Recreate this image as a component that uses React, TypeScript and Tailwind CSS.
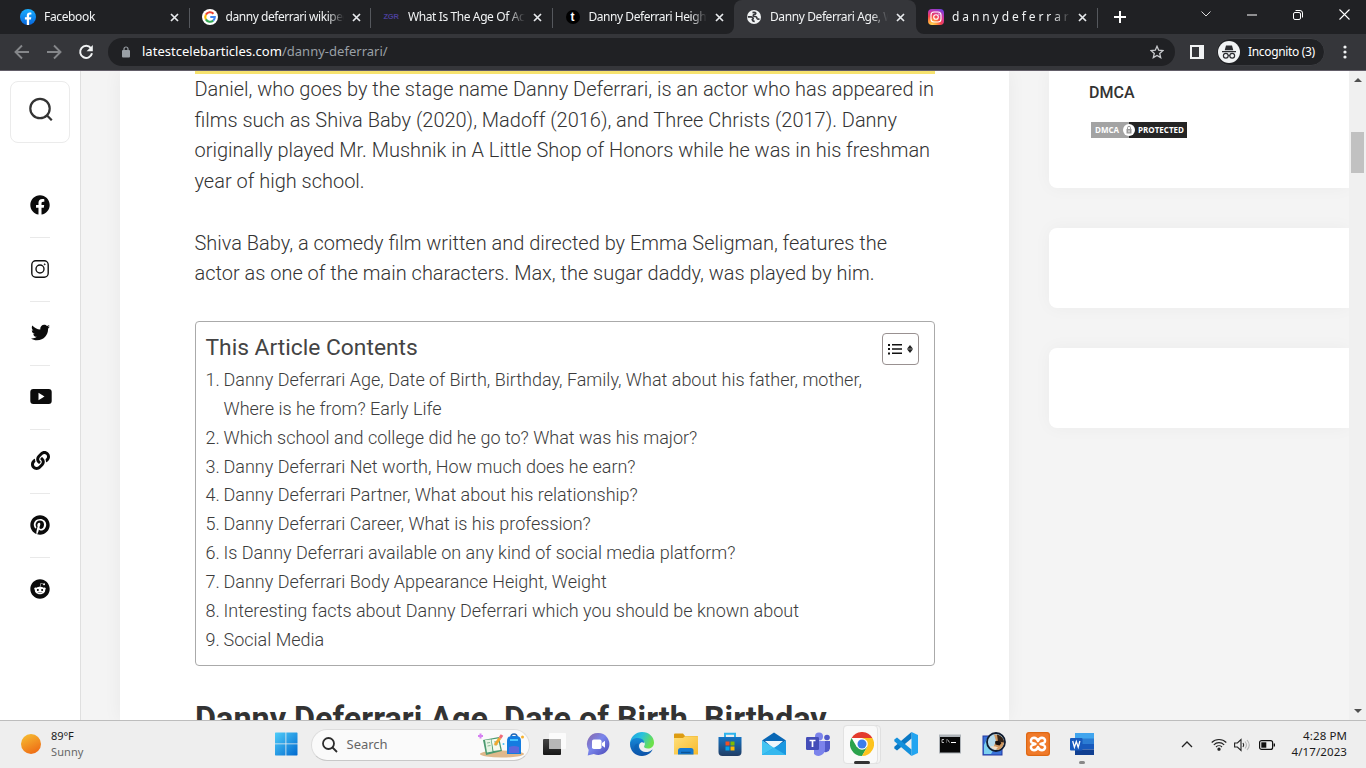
import React from "react";
import { FaFacebook, FaTwitter, FaLink, FaPinterest, FaReddit } from "react-icons/fa";

type Kids = { children: React.ReactNode };

const Svg = ({ s = 16, vb = "0 0 16 16", children }: { s?: number; vb?: string } & Kids) => (
  <svg width={s} height={s} viewBox={vb} fill="none" className="block shrink-0">
    {children}
  </svg>
);

/* ---------- Favicons ---------- */
const FacebookFav = () => (
  <Svg>
    <defs>
      <linearGradient id="fb" x1="0" y1="0" x2="0" y2="1">
        <stop offset="0" stopColor="#19afff" />
        <stop offset="1" stopColor="#0866dd" />
      </linearGradient>
    </defs>
    <circle cx="8" cy="8" r="8" fill="url(#fb)" />
    <path d="M6.8 16v-5.4H4.9V8.3h1.9V6.6c0-2 1.1-3.1 2.9-3.1.6 0 1.3.1 1.7.2v1.9h-1c-1 0-1.3.5-1.3 1.2v1.5h2.2l-.4 2.3H9.1V16z" fill="#fff" />
  </Svg>
);
const GoogleFav = () => (
  <Svg>
    <circle cx="8" cy="8" r="8" fill="#fff" />
    <g strokeWidth="2.1">
      <path d="M3.9 5.6A4.8 4.8 0 0 1 11.5 4.7" stroke="#ea4335" />
      <path d="M3.9 5.6A4.8 4.8 0 0 0 3.9 10.4" stroke="#fbbc05" />
      <path d="M3.9 10.4A4.8 4.8 0 0 0 11.2 11.6" stroke="#34a853" />
      <path d="M11.2 11.6A4.8 4.8 0 0 0 12.8 8H8.3" stroke="#4285f4" />
    </g>
  </Svg>
);
const GlobeFav = () => (
  <Svg>
    <circle cx="8" cy="8" r="7" fill="#f1f3f4" />
    <path d="M6.500 3.600q2.500-.6 3.300.6 0 1.200-1.700 1.300-1 .2-.8 1.400.4.700 2 .6 1.500.3 1.700 1.700.3 1 2.500.9" stroke="#35363a" strokeWidth="1.700" />
    <path d="M1.800 7.800h3.400q1.900.1 2 1.500-.1.900-.9 1.200.2 1.900 2.400 1.800" stroke="#35363a" strokeWidth="1.700" />
  </Svg>
);
const InstaFav = () => (
  <Svg>
    <defs>
      <radialGradient id="ig" cx="0.25" cy="1" r="1.15">
        <stop offset="0" stopColor="#ffdd55" />
        <stop offset="0.25" stopColor="#ff9a3d" />
        <stop offset="0.5" stopColor="#f4404f" />
        <stop offset="0.75" stopColor="#c837ab" />
        <stop offset="1" stopColor="#6a3fe0" />
      </radialGradient>
    </defs>
    <rect width="16" height="16" rx="4" fill="url(#ig)" />
    <rect x="3" y="3" width="10" height="10" rx="3" stroke="#fff" strokeWidth="1.1" />
    <circle cx="8" cy="8" r="2.300" stroke="#fff" strokeWidth="1.1" />
    <circle cx="10.900" cy="5.100" r=".7" fill="#fff" />
  </Svg>
);
const TFav = () => (
  <span className="flex h-[14px] w-[14px] items-center justify-center rounded-full bg-black pb-px font-['Liberation_Sans',sans-serif] text-[12px] font-bold leading-none text-white">t</span>
);
const ZgrFav = () => (
  <span className="font-['Liberation_Sans',sans-serif] text-[7.5px] font-bold leading-none tracking-[-0.2px] text-[#4b3f99]">ZGR</span>
);

const CloseX = () => (
  <svg width="9" height="9" viewBox="0 0 9 9" className="block shrink-0">
    <path d="M1 1l7 7M8 1l-7 7" stroke="#e8eaed" strokeWidth="1.7" />
  </svg>
);

type TabProps = { icon: React.ReactNode; title: string; active?: boolean; divider?: boolean; cls: string };
const Tab = ({ icon, title, active, divider, cls }: TabProps) => (
  <div className={`relative flex h-[34px] shrink-0 items-center pl-3 ${active ? "z-10 w-[182px] rounded-t-lg bg-[#35363a]" : "w-[181.500px]"}`}>
    {active && (
      <>
        <svg width="8" height="8" className="absolute bottom-0 -left-2"><path d="M8 0v8H0a8 8 0 0 0 8-8z" fill="#35363a" /></svg>
        <svg width="8" height="8" className="absolute -right-2 bottom-0"><path d="M0 0v8h8a8 8 0 0 1-8-8z" fill="#35363a" /></svg>
      </>
    )}
    <span className="flex w-4 justify-center">{icon}</span>
    <span className={`ml-2 w-[118px] overflow-hidden whitespace-nowrap text-[12px] text-[#f1f3f4] [mask-image:linear-gradient(to_right,#000_86%,transparent_100%)] ${cls}`}>{title}</span>
    <span className="ml-[8px]"><CloseX /></span>
    {divider && <span className="absolute top-2 right-0 h-5 w-px bg-[#55585d]" />}
  </div>
);

const TabStrip = () => (
  <div className="flex h-[34px] items-center bg-[#202124] pl-2">
    <Tab icon={<FacebookFav />} title="Facebook" divider cls="tracking-[-0.35px]" />
    <Tab icon={<GoogleFav />} title="danny deferrari wikipedia" divider cls="tracking-[-0.45px]" />
    <Tab icon={<ZgrFav />} title="What Is The Age Of Actor" divider cls="pl-px tracking-[-0.4px]" />
    <Tab icon={<TFav />} title="Danny Deferrari Height" cls="tracking-[-0.45px]" />
    <Tab icon={<GlobeFav />} title="Danny Deferrari Age, Wiki" active cls="tracking-[-0.4px]" />
    <Tab icon={<InstaFav />} title="d a n n y d e f e r r a r i" divider cls="tracking-[-0.1px]" />
    <svg width="12" height="12" className="ml-[16px] shrink-0"><path d="M6 0v12M0 6h12" stroke="#fff" strokeWidth="2" /></svg>
    <svg width="10" height="6" className="ml-[75px] mb-[6px] shrink-0"><path d="M.5.5L5 5 9.500.5" stroke="#ddd" fill="none" /></svg>
    <svg width="10" height="2" className="ml-[36px] mb-[5px] shrink-0"><path d="M0 1h10" stroke="#fff" /></svg>
    <svg width="10" height="10" className="ml-[36px] mb-[5px] shrink-0" fill="none" stroke="#fff"><rect x=".5" y="2.500" width="7" height="7" rx="1.500" /><path d="M2.500.5h4.500a2.500 2.500 0 0 1 2.500 2.500v4.500" /></svg>
    <svg width="11" height="11" className="ml-[36px] mb-[5px] shrink-0"><path d="M.5.5l10 10M10.500.5l-10 10" stroke="#fff" strokeWidth="1.1" /></svg>
  </div>
);

const Toolbar = () => (
  <div className="flex h-9 items-center bg-[#35363a]">
    <svg width="16" height="16" className="ml-[14px]" fill="none" stroke="#85878a" strokeWidth="1.900"><path d="M15 8H2M8 1.500L1.500 8 8 14.500" /></svg>
    <svg width="16" height="16" className="ml-4" fill="none" stroke="#85878a" strokeWidth="1.900"><path d="M1 8h13M8 1.500L14.500 8 8 14.500" /></svg>
    <svg width="16" height="16" className="ml-4"><path d="M12.900 4.200A6 6 0 1 0 14 9.200" fill="none" stroke="#f1f3f4" strokeWidth="2" /><path d="M14.800 1v6.200H8.600z" fill="#f1f3f4" /></svg>
    <div className="ml-[14px] flex h-7 w-[1067px] items-center rounded-full bg-[#202124]">
      <svg width="8" height="12" className="ml-[14px] shrink-0"><rect y="4" width="8" height="7.500" rx="1" fill="#9aa0a6" /><path d="M2 4.500V3a2 2 0 0 1 4 0v1.500" fill="none" stroke="#9aa0a6" strokeWidth="1.200" /></svg>
      <span className="ml-3 grow whitespace-nowrap text-[13px] tracking-[0.02px] text-[#9aa0a6]"><span className="text-white">latestcelebarticles.com</span>/danny-deferrari/</span>
      <svg width="14" height="14" viewBox="0 0 14 14" className="mr-[11px] shrink-0" fill="none" stroke="#c8cacd" strokeWidth="1.300"><path d="M7 1.300l1.700 3.900 4.200.4-3.200 2.800 1 4.200L7 10.400l-3.700 2.200 1-4.200L1.100 5.600l4.200-.4z" /></svg>
    </div>
    <svg width="14" height="14" className="ml-[15px] shrink-0"><path fillRule="evenodd" d="M0 0h14v14H0zM2 2v10h7V2z" fill="#f1f3f4" /></svg>
    <div className="ml-3 flex h-7 w-[109px] items-center rounded-full border border-[#3b3c40] bg-[#202124] pl-px">
      <svg width="22" height="22" className="shrink-0"><circle cx="11" cy="11" r="11" fill="#f1f3f4" />
        <path d="M8 4.500h6l1.300 4.700H6.700zM4 10h14v1.200H4z" fill="#2b2c30" />
        <g fill="none" stroke="#2b2c30" strokeWidth="1.200"><circle cx="7.800" cy="14.800" r="2.400" /><circle cx="14.200" cy="14.800" r="2.400" /><path d="M10.200 14.500h1.600" /></g>
      </svg>
      <span className="ml-2 whitespace-nowrap text-[12px] tracking-[-0.33px] text-white">Incognito (3)</span>
    </div>
    <svg width="4" height="14" className="ml-[18px] shrink-0" fill="#f1f3f4"><circle cx="2" cy="2" r="1.600" /><circle cx="2" cy="7" r="1.600" /><circle cx="2" cy="12" r="1.600" /></svg>
  </div>
);

/* ---------- Page ---------- */
const social = [
  <FaFacebook size={20} />,
  <svg width="18" height="18" viewBox="0 0 18 18" fill="none" stroke="#111" strokeWidth="1.400"><rect x=".8" y=".8" width="16.400" height="16.400" rx="4" /><circle cx="9" cy="9" r="4" /><circle cx="13.700" cy="4.300" r=".5" fill="#111" strokeWidth=".8" /></svg>,
  <FaTwitter size={19} />,
  <svg width="22" height="15" viewBox="0 0 22 15" className="ml-[2px] shrink-0"><rect x=".3" width="21.400" height="15" rx="3" fill="#0b0b0b" /><path d="M8.500 3.800v7.400l6-3.700z" fill="#fff" /></svg>,
  <FaLink size={19} />,
  <FaPinterest size={20} />,
  <FaReddit size={20} />,
];

const Sidebar = () => (
  <aside className="flex w-[81px] shrink-0 flex-col items-center border-r border-[#dfdfdf] bg-white text-[#0b0b0b]">
    <div className="mt-[10px] flex h-[62px] w-[60px] items-start justify-center rounded-lg border border-[#ebebeb] pt-[15px] pl-px">
      <svg width="24" height="24" fill="none" stroke="#333" strokeWidth="2.200"><circle cx="11" cy="11.500" r="9.700" /><path d="M17.800 18.300l5 5" /></svg>
    </div>
    <div className="mt-[31px] flex w-5 flex-col">
      {social.map((icon, i) => (
        <div key={i} className={`flex h-16 items-center justify-center border-b pb-[2px] ${i < 6 ? "border-[#e9e9e9]" : "border-transparent"}`}>{icon}</div>
      ))}
    </div>
  </aside>
);

const Line = ({ t }: { t: string }) => <span className="block whitespace-nowrap">{t}</span>;

const toc: string[][] = [
  ["Danny Deferrari Age, Date of Birth, Birthday, Family, What about his father, mother,", "Where is he from? Early Life"],
  ["Which school and college did he go to? What was his major?"],
  ["Danny Deferrari Net worth, How much does he earn?"],
  ["Danny Deferrari Partner, What about his relationship?"],
  ["Danny Deferrari Career, What is his profession?"],
  ["Is Danny Deferrari available on any kind of social media platform?"],
  ["Danny Deferrari Body Appearance Height, Weight"],
  ["Interesting facts about Danny Deferrari which you should be known about"],
  ["Social Media"],
];

const Article = () => (
  <main className="ml-[39px] h-[649px] w-[889px] shrink-0 overflow-hidden bg-white pl-[75px] font-[Roboto,sans-serif] shadow-[0_0_18px_rgba(0,0,0,0.05)]">
    <div className="h-[3px] w-[740px] bg-[#f7e36f]" />
    <p className="-ml-[0.500px] text-[19.980px] font-light leading-[30.600px] text-[#333]">
      <Line t="Daniel, who goes by the stage name Danny Deferrari, is an actor who has appeared in" />
      <Line t="films such as Shiva Baby (2020), Madoff (2016), and Three Christs (2017). Danny" />
      <Line t="originally played Mr. Mushnik in A Little Shop of Honors while he was in his freshman" />
      <Line t="year of high school." />
    </p>
    <p className="mt-[31.500px] -ml-[0.500px] text-[19.980px] font-light leading-[30.600px] text-[#333]">
      <Line t="Shiva Baby, a comedy film written and directed by Emma Seligman, features the" />
      <Line t="actor as one of the main characters. Max, the sugar daddy, was played by him." />
    </p>
    <nav className="mt-[32px] h-[345px] w-[740px] rounded border border-[#aaa] pl-[9.500px]">
      <div className="flex h-[44px] justify-between pt-[11px] pr-[15px]">
        <span className="text-[22.800px] leading-[30px] text-[#444]">This Article Contents</span>
        <span className="flex h-8 w-[37px] items-center rounded border border-[#999191] pl-[5px]">
          <svg width="14" height="12" fill="#111"><path d="M0 1h2v2H0zM4 1h10v1.600H4zM0 5h2v2H0zM4 5.200h10v1.600H4zM0 9.500h2v2H0zM4 9.500h10v1.600H4z" /></svg>
          <svg width="6" height="8" className="ml-[5px]" fill="#222"><path d="M3 0l3 3.700H0zM3 8L0 4.300h6z" /></svg>
        </span>
      </div>
      <ol className="text-[18px] font-light leading-[28.850px] text-[#3c3c3c]">
        {toc.map((lines, i) => (
          <li key={i} className="flex">
            <span className="w-[18px] whitespace-nowrap">{i + 1}.</span>
            <span>{lines.map((l) => <Line key={l} t={l} />)}</span>
          </li>
        ))}
      </ol>
    </nav>
    <h2 className="mt-[32px] whitespace-nowrap text-[32.400px] font-bold leading-[42px] text-[#333]">Danny Deferrari Age, Date of Birth, Birthday,</h2>
  </main>
);

const RightColumn = () => (
  <aside className="ml-10 flex w-[300px] shrink-0 flex-col gap-10">
    <div className="h-[117px] rounded-bl-lg bg-white pl-10 shadow-[0_0_18px_rgba(0,0,0,0.04)]">
      <h3 className="pt-[10px] font-[Roboto,sans-serif] text-[16px] font-medium leading-6 text-[#333]">DMCA</h3>
      <div className="relative mt-[17px] ml-[2px] flex h-4 w-24 font-['Open_Sans',sans-serif] text-[8px] font-bold leading-4 text-white">
        <span className="w-[38px] bg-[#a3a3a3] pl-1">DMCA</span>
        <span className="flex-1 bg-[#242424] pl-[9px] whitespace-nowrap">PROTECTED</span>
        <svg width="12" height="12" className="absolute top-[2px] left-8"><circle cx="6" cy="6" r="6" fill="#fff" /><rect x="3.500" y="5" width="5" height="4.500" fill="#999" /><path d="M4.500 5V3.800a1.500 1.500 0 0 1 3 0V5" fill="none" stroke="#999" /><path d="M6 6.300v2" stroke="#fff" /></svg>
      </div>
    </div>
    <div className="h-20 rounded-l-lg bg-white shadow-[0_0_18px_rgba(0,0,0,0.04)]" />
    <div className="h-20 rounded-l-lg bg-white shadow-[0_0_18px_rgba(0,0,0,0.04)]" />
  </aside>
);

const Scrollbar = () => (
  <div className="z-10 flex w-[17px] shrink-0 flex-col items-center bg-[#f0f0f0]">
    <svg width="8" height="4" className="mt-[7px]"><path d="M4 0l4 4H0z" fill="#505050" /></svg>
    <div className="mt-[50px] h-[41px] w-[13px] bg-[#c1c1c1]" />
    <svg width="8" height="4" className="mt-auto mb-[7px]"><path d="M0 0h8L4 4z" fill="#505050" /></svg>
  </div>
);

/* ---------- Taskbar ---------- */
const V = ({ children }: Kids) => <Svg s={24} vb="0 0 24 24">{children}</Svg>;

const StartIcon = () => (
  <V>
    <defs><linearGradient id="win" x1="0" y1="0" x2="1" y2="1"><stop offset="0" stopColor="#50cdf9" /><stop offset="1" stopColor="#0069cf" /></linearGradient></defs>
    <path d="M1.500.5h10v11H1V1zM12.300.5H23l.5.5v10.500H12.300zM1 12.300h10.500v11.200h-10l-.5-.5zM12.300 12.300h11.200V23l-.5.5H12.300z" fill="url(#win)" />
  </V>
);

const apps: React.ReactNode[] = [
  <V>
    <defs><linearGradient id="tv" x1="0" y1="0" x2="0" y2="1"><stop offset="0" stopColor="#444" /><stop offset="1" stopColor="#171717" /></linearGradient></defs>
    <rect x="1" y="7" width="18" height="16" rx="1" fill="url(#tv)" /><rect x="7" y="1" width="17" height="16" rx="1" fill="#fff" fillOpacity=".75" /><path d="M7 7h12v10H7z" fill="#b0b0b0" opacity=".8" />
  </V>,
  <V>
    <defs><linearGradient id="chat" x1="0" y1="0" x2="1" y2="1"><stop offset="0" stopColor="#8a66a5" /><stop offset=".45" stopColor="#7a86ec" /><stop offset="1" stopColor="#4a46b4" /></linearGradient></defs>
    <path d="M12.500 1a11 11 0 1 1-4.700 21L1.700 23.500l1-5.600A11 11 0 0 1 12.500 1z" fill="url(#chat)" /><rect x="6" y="7.500" width="9.500" height="9.500" rx="1.800" fill="#fff" /><path d="M16 11l3-2.300v7L16 13.500z" fill="#fff" />
  </V>,
  <V>
    <defs>
      <linearGradient id="e1" x1="0" y1="0" x2="1" y2=".4"><stop offset="0" stopColor="#1b9de2" /><stop offset=".5" stopColor="#2ac2dd" /><stop offset="1" stopColor="#6be04c" /></linearGradient>
      <linearGradient id="e2" x1="0" y1="0" x2="0" y2="1"><stop offset="0" stopColor="#1589d8" /><stop offset="1" stopColor="#0d4fa6" /></linearGradient>
    </defs>
    <path d="M0 11C1 4 6 0 12 0c7 0 12 5 12 10.500 0 4-3 6-6 6-3.200 0-4.500-1.400-3.800-2.500 1.900-3-.4-5.800-4.200-5.800C5 8.200 1.500 10 0 12z" fill="url(#e1)" />
    <path d="M0 12c.3-4.300 4.500-6.300 8-6 4 .3 6.300 2.300 6.300 5.200 0-.1-2.300-2.300-4.500.3-2.200 3 .4 8.200 5.700 8.500 2.500.1 5-.8 6.500-2.300.4-.3.600 0 .4.400C20.500 21.800 16.500 24 12 24 5 24 0 18.500 0 12z" fill="url(#e2)" />
    <path d="M8.500 11.500c-2.400 4.300.5 10.500 6 12-5.500.800-10.500-3.500-10.200-8.500.1-2 1.700-3.700 4.200-3.500z" fill="#0a5fb0" opacity=".6" />
  </V>,
  <V>
    <defs><linearGradient id="fo" x1="0" y1="0" x2="1" y2="1"><stop offset="0" stopColor="#ffe07a" /><stop offset="1" stopColor="#f7b92c" /></linearGradient></defs>
    <path d="M0 2.500q0-1 1-1h8l2 2.500h12q1 0 1 1V12H0z" fill="#dd9c12" /><path d="M0 6h9l2-1.800h13v18.300H0z" fill="url(#fo)" /><path d="M4 22.500v-4q0-2.500 2.500-2.500h10.500q2.500 0 2.500 2.500v4z" fill="#1479d2" /><path d="M7 20.500h9.500" stroke="#0a5396" strokeWidth="1.500" />
  </V>,
  <V>
    <defs><linearGradient id="st" x1="0" y1="0" x2="0" y2="1"><stop offset="0" stopColor="#1574c4" /><stop offset="1" stopColor="#213c63" /></linearGradient></defs>
    <path d="M7 6V1.800h10V6" stroke="#2eb4ed" strokeWidth="2" /><path d="M.5 5h23v15q0 4-4 4h-15q-4 0-4-4z" fill="url(#st)" />
    <path d="M7.500 9.500h4v4h-4z" fill="#f25022" /><path d="M12.500 9.500h4v4h-4z" fill="#7fba00" /><path d="M7.500 14.500h4v4h-4z" fill="#00a4ef" /><path d="M12.500 14.500h4v4h-4z" fill="#ffb900" />
  </V>,
  <V>
    <path d="M0 8.500L12 .5l12 8-12 9z" fill="#0967b5" /><path d="M3 9h18l-9 8z" fill="#eef6fb" /><path d="M0 8.500L24 23H0z" fill="#43c4f2" /><path d="M24 8.500L0 23h24z" fill="#1a98e0" /><path d="M0 23l12-7.300L24 23z" fill="#35b8ee" />
  </V>,
  <V>
    <circle cx="13" cy="4.500" r="4" fill="#7b83eb" /><circle cx="21" cy="5.500" r="2.800" fill="#5059c9" /><path d="M16 9h8v7.500a4.500 4.500 0 0 1-8 2z" fill="#5059c9" /><path d="M8 9h11v8.500a6.500 6.500 0 0 1-11 4.500z" fill="#7b83eb" /><rect y="5" width="13" height="13" rx="1.200" fill="#444db8" />
    <path d="M3.500 8.500h6M6.500 8.500v6.500" stroke="#fff" strokeWidth="1.700" />
  </V>,
  <V>
    <circle cx="12" cy="12" r="12" fill="#fff" /><path d="M1.600 6A12 12 0 0 1 22.400 6H12z" fill="#e33b2e" /><path d="M1.600 6A12 12 0 0 0 12 24l5.200-9L12 12 6.800 15z" fill="#2ba24c" /><path d="M22.400 6A12 12 0 0 1 12 24l5.200-9L12 6z" fill="#fcc31e" /><circle cx="12" cy="12" r="5.800" fill="#fff" /><circle cx="12" cy="12" r="4.500" fill="#3b7de9" />
  </V>,
  <V>
    <path d="M17.500 0L24 3v18l-6.500 3z" fill="#23a5f1" /><path d="M17.500 0v6.500L3 18.500.3 16.500v-1.700z" fill="#0a78c4" /><path d="M17.500 24v-6.500L3 5.500.3 7.500v1.700z" fill="#1490dc" />
  </V>,
  <V>
    <rect x="1" y="2.500" width="22" height="19" fill="#aeb3b8" /><rect x="2" y="5" width="20" height="15.500" fill="#080808" /><path d="M4 7.500h2M4 7.500v3h2M8 8h.8M8 10h.8M9.500 7.500l2 3" stroke="#ddd" strokeWidth=".8" /><path d="M13 10.500h5" stroke="#fff" />
  </V>,
  <V>
    <rect x="1" y="4" width="19" height="19" fill="#3972d8" stroke="#2336a0" /><path d="M2 13l4-8 6 12-3 5H2z" fill="#7bd0ef" /><circle cx="14" cy="10" r="9" fill="#b4d9ea" stroke="#101c30" strokeWidth="1.800" /><path d="M12 2.500q9-.5 10 8-1 6-6 7.500l-5-2 3-7z" fill="#d29a62" /><path d="M15 2.500q7 2 7 8l-6-1z" fill="#332318" /><path d="M13 9.500q4-2 6.500 1.500l-2 2.500-4-1z" fill="#17120f" /><path d="M8 14.500q5-1 8 1l-3 2.500z" fill="#f2dec4" />
  </V>,
  <V>
    <rect width="24" height="24" rx="3" fill="#f07a2a" /><rect x=".7" y=".7" width="22.600" height="22.600" rx="2.500" stroke="#d9640f" />
    <path d="M9.500 12L6.200 10.800Q4.600 10 5 8q.8-2.200 3-2.200Q11 6 12 9q1-3 4-3.200 2.200 0 3 2.200.4 2-1.200 2.800L14.500 12l3.300 1.200q1.600.8 1.200 2.800-.8 2.200-3 2.200-3-.2-4-3.200-1 3-4 3.200-2.200 0-3-2.200-.4-2 1.200-2.800z" stroke="#fff" strokeWidth="2.400" strokeLinejoin="round" />
  </V>,
  <V>
    <path d="M5 1h19v6H5z" fill="#41a5ee" /><path d="M5 6.500h19V12H5z" fill="#2b7cd3" /><path d="M5 12h19v5.500H5z" fill="#185abd" /><path d="M5 17.500h19V23H5z" fill="#103f91" /><rect y="6" width="12.500" height="12.500" rx="1" fill="#185abd" /><path d="M2.700 9l1.700 6.300L6.300 9.500l1.900 5.800L9.900 9" stroke="#fff" strokeWidth="1.300" />
  </V>,
];

const Taskbar = () => (
  <footer className="flex h-12 shrink-0 items-center border-t border-[#bdbdbd] bg-[#eee]">
    <div className="flex w-[263.500px] items-center">
      <svg width="20" height="20" className="mb-[2px] ml-[21px]"><defs><linearGradient id="sun" x1=".2" y1="0" x2=".7" y2="1"><stop offset="0" stopColor="#f6bc32" /><stop offset="1" stopColor="#ee6a14" /></linearGradient></defs><circle cx="10" cy="10" r="10" fill="url(#sun)" /></svg>
      <div className="mb-[2px] ml-[10px] text-[11px] leading-4 text-[#1b1b1b]"><div className="tracking-[-0.1px]">89°F</div><div className="tracking-[0.1px] text-[#666]">Sunny</div></div>
    </div>
    <div className="flex w-11 justify-center pb-px"><StartIcon /></div>
    <div className="ml-[3px] flex h-8 w-[219px] items-center rounded-full border border-[#ddd] border-b-[#c8c8c8] bg-[#fafafa] pl-[10px]">
      <svg width="16" height="16" className="shrink-0" fill="none" stroke="#2b2b2b" strokeWidth="1.800"><circle cx="6.500" cy="6.500" r="5.500" /><path d="M10.500 10.500l4.500 4.500" /></svg>
      <span className="ml-[9px] w-[131px] text-[13px] text-[#666]">Search</span>
      <svg width="46" height="26" fill="none" className="shrink-0">
        <ellipse cx="24" cy="22" rx="22" ry="3.500" fill="#dfb88b" />
        <path d="M2.500 1.500v5M0 4h5" stroke="#d681f2" strokeWidth="2" />
        <path d="M5 8l16-3 3 14-16 4z" fill="#4b9a70" /><path d="M7 8l6-.5 1.500 12-5.500 1z" fill="#e6f4e3" /><path d="M13.500 7.500l6.500-1 2.500 11.500-7 1z" fill="#f7fbef" /><path d="M9 11l3-.5M9.500 14l3-.5M16 10l3-.5M16.500 13l3-.5" stroke="#87b995" />
        <path d="M17 13l5-7" stroke="#f0a82e" strokeWidth="3" /><path d="M22 6l2-3" stroke="#ef6a7a" strokeWidth="3" />
        <path d="M33 5a3 3 0 0 1 6 0" stroke="#2469b7" strokeWidth="1.500" /><path d="M29 9q0-5 5-5h4q5 0 5 5v13H29z" fill="#147ce0" /><path d="M31 15q5-2 10 0v6H31z" fill="#5a67dc" /><path d="M32 8h8" stroke="#47c5ff" strokeWidth="2" /><circle cx="44.500" cy="5" r="1.500" fill="#f6b22e" /><circle cx="25.500" cy="12" r="1" fill="#4fc3f7" />
      </svg>
    </div>
    <div className="ml-[2.500px] flex">
      {apps.map((a, i) => (
        <div key={i} className="relative flex h-12 w-11 items-center justify-center">
          {i === 7 && <><span className="absolute top-1 left-[3px] h-[39px] w-[38px] rounded border border-[#e0e0e0] bg-[#f4f4f4]" /><span className="absolute top-1 left-[3px] h-[39px] w-[35px] rounded border border-[#e2e2e2] bg-[#f9f9f9]" /></>}
          <span className="relative pb-px">{a}</span>
          {i === 7 && <span className="absolute bottom-[5px] left-[14px] h-[3px] w-4 rounded bg-[#333]" />}
          {i === 12 && <span className="absolute bottom-[5px] left-[19px] h-[3px] w-[6px] rounded bg-[#888]" />}
        </div>
      ))}
    </div>
    <svg width="12" height="7" className="ml-[77px]" fill="none" stroke="#222" strokeWidth="1.300"><path d="M1 6l5-5 5 5" /></svg>
    <svg width="16" height="13" className="ml-[18px]" fill="none" stroke="#222" strokeWidth="1.100"><path d="M.7 4.500a10.300 10.300 0 0 1 14.600 0M2.800 6.800a7.300 7.300 0 0 1 10.400 0M5 9a4.300 4.300 0 0 1 6 0" /><circle cx="8" cy="11.200" r="1.100" fill="#222" /></svg>
    <svg width="17" height="14" className="ml-[7px]" fill="none" stroke="#222" strokeWidth="1.100"><path d="M.6 5h2.800L7 1.500v11L3.400 9H.6z" /><path d="M9 5q1.500 2 0 4" /><path d="M11 3.500q3 3.500 0 7M13 2q4.500 5 0 10" stroke="#b5b5b5" /></svg>
    <svg width="16" height="10" className="ml-[8px]"><rect x=".6" y=".6" width="13" height="8.800" rx="2" fill="none" stroke="#111" strokeWidth="1.200" /><rect x="2.300" y="2.300" width="5" height="5.400" fill="#111" /><path d="M15.300 3.500v3" stroke="#111" strokeWidth="1.400" /></svg>
    <div className="mr-[19px] mb-[2px] ml-auto whitespace-nowrap text-right text-[11.500px] leading-4 tracking-[0.1px] text-[#1b1b1b]"><div>4:28 PM</div><div>4/17/2023</div></div>
  </footer>
);

export default function App() {
  return (
    <div className="flex h-[768px] w-[1366px] flex-col overflow-hidden font-['Noto_Sans',sans-serif]">
      <TabStrip />
      <Toolbar />
      <div className="flex h-[650px] shrink-0 overflow-hidden border-t border-[#625d68] bg-[#f4f4f4]">
        <Sidebar />
        <Article />
        <RightColumn />
        <Scrollbar />
      </div>
      <Taskbar />
    </div>
  );
}
